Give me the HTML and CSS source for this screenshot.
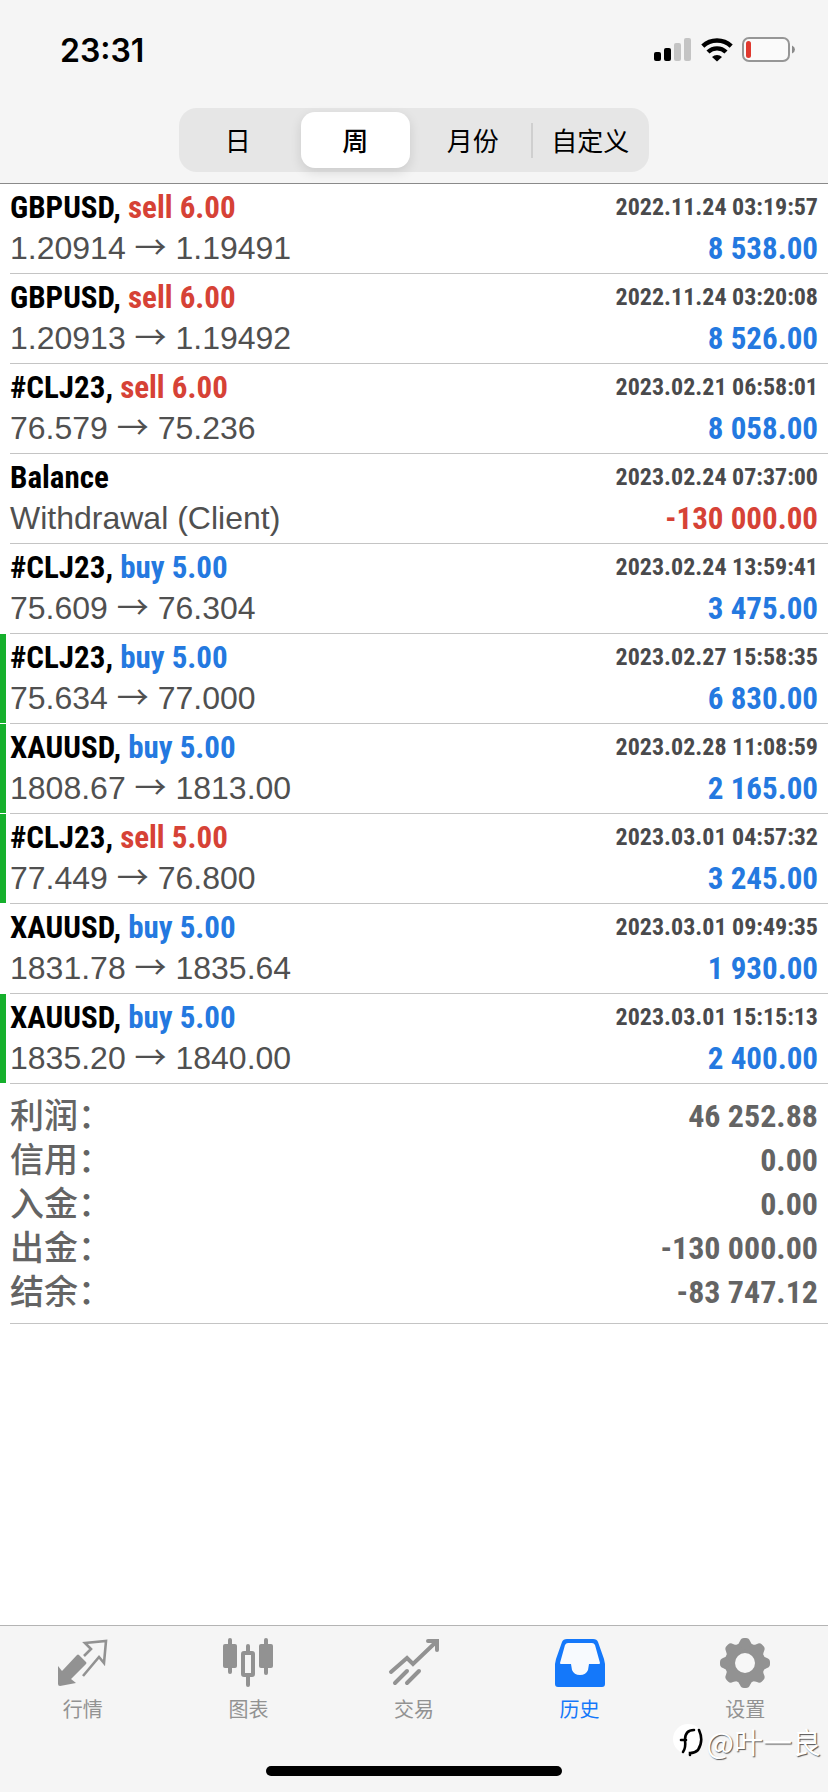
FILE: index.html
```html
<!DOCTYPE html>
<html lang="zh-CN">
<head>
<meta charset="utf-8">
<meta name="viewport" content="width=device-width, initial-scale=1">
<title>历史</title>
<link rel="stylesheet" href="styles.css">
</head>
<body>
<div class="app">
  <header class="top">
    <div class="status">
      <time class="clock">23:31</time>
      <div class="status-icons">
        <svg width="38" height="24" viewBox="0 0 38 24" aria-hidden="true">
          <rect x="0" y="14" width="7" height="9" rx="2"/>
          <rect x="10" y="10" width="7" height="13" rx="2"/>
          <rect x="20" y="5" width="7" height="18" rx="2" fill="#c4c4c4"/>
          <rect x="30" y="0" width="7" height="23" rx="2" fill="#c4c4c4"/>
        </svg>
        <svg width="32" height="24" viewBox="0 0 32 24" aria-hidden="true">
          <g fill="none" stroke="#000" stroke-width="4.4">
            <path d="M1.8 8.2A20.5 20.5 0 0 1 30.200 8.200"/>
            <path d="M7 14A13 13 0 0 1 25 14"/>
          </g>
          <path d="M11 19a7.400 7.400 0 0 1 10 0l-5 4.500z"/>
        </svg>
        <svg width="54" height="26" viewBox="0 0 54 26" aria-hidden="true">
          <rect x="1" y="1" width="46" height="23" rx="6" fill="#fafafa" stroke="#969696" stroke-width="2"/>
          <rect x="4" y="4" width="5" height="17" rx="2.500" fill="#e0392f"/>
          <path d="M50 8.500q3 1.500 3 4t-3 4z" fill="#8a8a8a"/>
        </svg>
      </div>
    </div>
    <div class="segments">
      <button class="segment" type="button">日</button>
      <button class="segment active" type="button" aria-pressed="true">周</button>
      <button class="segment" type="button">月份</button>
      <span class="divider"></span>
      <button class="segment" type="button">自定义</button>
    </div>
  </header>

  <main class="history">
    <ul class="deals">
      <li class="deal"><span class="mark"></span><div class="body">
        <div class="line"><span class="symbol">GBPUSD, <span class="sell">sell 6.00</span></span><time class="date">2022.11.24 03:19:57</time></div>
        <div class="line"><span class="price">1.20914 <span class="arrow">→</span> 1.19491</span><span class="amount buy">8 538.00</span></div>
      </div></li>
      <li class="deal"><span class="mark"></span><div class="body">
        <div class="line"><span class="symbol">GBPUSD, <span class="sell">sell 6.00</span></span><time class="date">2022.11.24 03:20:08</time></div>
        <div class="line"><span class="price">1.20913 <span class="arrow">→</span> 1.19492</span><span class="amount buy">8 526.00</span></div>
      </div></li>
      <li class="deal"><span class="mark"></span><div class="body">
        <div class="line"><span class="symbol">#CLJ23, <span class="sell">sell 6.00</span></span><time class="date">2023.02.21 06:58:01</time></div>
        <div class="line"><span class="price">76.579 <span class="arrow">→</span> 75.236</span><span class="amount buy">8 058.00</span></div>
      </div></li>
      <li class="deal"><span class="mark"></span><div class="body">
        <div class="line"><span class="symbol">Balance</span><time class="date">2023.02.24 07:37:00</time></div>
        <div class="line"><span class="price">Withdrawal (Client)</span><span class="amount sell">-130 000.00</span></div>
      </div></li>
      <li class="deal"><span class="mark"></span><div class="body">
        <div class="line"><span class="symbol">#CLJ23, <span class="buy">buy 5.00</span></span><time class="date">2023.02.24 13:59:41</time></div>
        <div class="line"><span class="price">75.609 <span class="arrow">→</span> 76.304</span><span class="amount buy">3 475.00</span></div>
      </div></li>
      <li class="deal"><span class="mark target"></span><div class="body">
        <div class="line"><span class="symbol">#CLJ23, <span class="buy">buy 5.00</span></span><time class="date">2023.02.27 15:58:35</time></div>
        <div class="line"><span class="price">75.634 <span class="arrow">→</span> 77.000</span><span class="amount buy">6 830.00</span></div>
      </div></li>
      <li class="deal"><span class="mark target"></span><div class="body">
        <div class="line"><span class="symbol">XAUUSD, <span class="buy">buy 5.00</span></span><time class="date">2023.02.28 11:08:59</time></div>
        <div class="line"><span class="price">1808.67 <span class="arrow">→</span> 1813.00</span><span class="amount buy">2 165.00</span></div>
      </div></li>
      <li class="deal"><span class="mark target"></span><div class="body">
        <div class="line"><span class="symbol">#CLJ23, <span class="sell">sell 5.00</span></span><time class="date">2023.03.01 04:57:32</time></div>
        <div class="line"><span class="price">77.449 <span class="arrow">→</span> 76.800</span><span class="amount buy">3 245.00</span></div>
      </div></li>
      <li class="deal"><span class="mark"></span><div class="body">
        <div class="line"><span class="symbol">XAUUSD, <span class="buy">buy 5.00</span></span><time class="date">2023.03.01 09:49:35</time></div>
        <div class="line"><span class="price">1831.78 <span class="arrow">→</span> 1835.64</span><span class="amount buy">1 930.00</span></div>
      </div></li>
      <li class="deal"><span class="mark target"></span><div class="body">
        <div class="line"><span class="symbol">XAUUSD, <span class="buy">buy 5.00</span></span><time class="date">2023.03.01 15:15:13</time></div>
        <div class="line"><span class="price">1835.20 <span class="arrow">→</span> 1840.00</span><span class="amount buy">2 400.00</span></div>
      </div></li>
    </ul>
    <dl class="summary">
      <div class="total"><dt>利润：</dt><dd>46 252.88</dd></div>
      <div class="total"><dt>信用：</dt><dd>0.00</dd></div>
      <div class="total"><dt>入金：</dt><dd>0.00</dd></div>
      <div class="total"><dt>出金：</dt><dd>-130 000.00</dd></div>
      <div class="total"><dt>结余：</dt><dd>-83 747.12</dd></div>
    </dl>
  </main>

  <footer class="bottom">
    <nav class="tabs">
      <a class="tab" href="#quotes">
        <svg width="52" height="52" viewBox="0 0 52 52" aria-hidden="true">
          <path fill="currentColor" d="M1 28l4 5L20 17q1-1 2 0l7 7q1 1 0 2L14 41l5 4-16 3q-2 0-2-2z"/>
          <path fill="none" stroke="currentColor" stroke-width="2.600" d="M27 18l7-7-6-6 21-2-2 22-5-6-16 19"/>
        </svg>
        <span>行情</span>
      </a>
      <a class="tab" href="#chart">
        <svg width="52" height="52" viewBox="0 0 52 52" aria-hidden="true" fill="currentColor">
          <rect x="6" y="0" width="4" height="36" rx="2"/><rect x="1" y="6" width="14" height="24" rx="2"/>
          <rect x="42" y="0" width="4" height="37" rx="2"/><rect x="37" y="6" width="14" height="24" rx="2"/>
          <rect x="24" y="6" width="4" height="10" rx="2"/><rect x="24" y="36" width="4" height="13" rx="2"/>
          <rect x="21" y="15" width="10" height="22" rx="1" fill="none" stroke="currentColor" stroke-width="4"/>
        </svg>
        <span>图表</span>
      </a>
      <a class="tab" href="#trade">
        <svg width="52" height="52" viewBox="0 0 52 52" aria-hidden="true" fill="none" stroke="currentColor" stroke-width="4" stroke-linecap="round">
          <path d="M3 34l16-14 6 6L48 4M7 45l12-12M19 45l12-12" stroke-linejoin="miter"/>
          <path d="M40 3h9v9"/>
        </svg>
        <span>交易</span>
      </a>
      <a class="tab current" href="#history" aria-current="page">
        <svg width="52" height="52" viewBox="0 0 52 52" aria-hidden="true">
          <path fill="currentColor" d="M13 1h26q4 0 5 3l6 17 1 5v20q0 3-3 3H4q-3 0-3-3V26l1-5L8 4q1-3 5-3z"/>
          <path fill="#f7fafe" d="M14 5h24q2 0 3 2l5 18q0 1-1 1H35l-1 6q-2 5-8 5t-8-5l-1-6H7q-1 0-1-1L11 7q1-2 3-2z"/>
        </svg>
        <span>历史</span>
      </a>
      <a class="tab" href="#settings">
        <svg width="52" height="52" viewBox="0 0 52 52" aria-hidden="true">
          <g fill="currentColor" transform="translate(26 25)">
            <circle r="20"/>
            <g id="teeth"><path id="tooth" d="M-9-17Q-6-19-5-22-4-25-1-25H1Q4-25 5-22 6-19 9-17V-10H-9z"/><use href="#tooth" transform="rotate(90)"/><use href="#tooth" transform="rotate(180)"/><use href="#tooth" transform="rotate(270)"/></g>
            <use href="#teeth" transform="rotate(45)"/>
            <circle r="10" fill="#f7f7f7"/>
          </g>
        </svg>
        <span>设置</span>
      </a>
    </nav>
    <div class="home-bar"></div>
    <div class="watermark">
      <svg width="32" height="34" viewBox="0 0 32 34" aria-hidden="true">
        <circle cx="15" cy="15" r="15" fill="#fff"/>
        <g fill="none" stroke="#000" stroke-width="2.600" stroke-linecap="round">
          <path d="M8 16h5M10 28Q13 24 12 16 12 6 21 6"/>
          <path d="M26 6Q31 17 25 26q-3 3-8 3v2"/>
        </g>
      </svg>
      <span>@叶一良</span>
    </div>
  </footer>
</div>
</body>
</html>
```
FILE: styles.css
```css
* {
  box-sizing: border-box;
}

body {
  margin: 0;
  background: #fff;
  color: #000;
  font-family: "Liberation Sans", "Noto Sans CJK SC", sans-serif;
}

.app {
  display: flex;
  flex-direction: column;
  min-height: 100vh;
}

/* Header */
.top {
  background: #f5f5f5;
  border-bottom: 1px solid #8a8a8a;
  padding-bottom: 11px;
}

.status {
  display: flex;
  justify-content: space-between;
  align-items: center;
  height: 108px;
  padding: 0 32px 8px 60px;
}

.clock {
  font-family: Inter, sans-serif;
  font-size: 32px;
  font-weight: 600;
}

.status-icons {
  display: flex;
  align-items: center;
  gap: 9px;
}

.segments {
  display: flex;
  align-items: center;
  width: 100%;
  max-width: 470px;
  height: 64px;
  margin: 0 auto;
  border-radius: 18px;
  background: #e6e6e6;
}

.segment {
  flex: 1 1 0;
  height: 56px;
  margin: 0 4px;
  padding: 0;
  border: 0;
  border-radius: 14px;
  background: transparent;
  color: #000;
  font-family: "Noto Sans CJK SC", sans-serif;
  font-size: 26px;
  line-height: 54px;
  white-space: nowrap;
}

.segment.active {
  background: #fff;
  box-shadow: 0 4px 12px rgba(0, 0, 0, 0.12);
  font-weight: 500;
}

.divider {
  width: 2px;
  height: 35px;
  margin: 0 -1px;
  background: #cfcfcf;
}

/* Deals */
.history {
  flex: 1;
}

.deals {
  margin: 0;
  padding: 0;
  list-style: none;
}

.deal {
  display: flex;
  gap: 4px;
}

.mark {
  flex: none;
  width: 6px;
  margin-bottom: 1px;
}

.target {
  background: #16b02c;
}

.body {
  flex: 1;
  padding: 3px 10px 4px 0;
  border-bottom: 1px solid #c4c4c4;
}

.line {
  display: flex;
  justify-content: space-between;
  height: 41px;
  line-height: 41px;
  white-space: nowrap;
}

.symbol,
.date,
.amount,
.total dd {
  font-family: "Roboto Condensed", "Arial Narrow", "Liberation Sans Narrow", sans-serif;
  font-weight: 700;
}

.symbol,
.amount {
  font-size: 31px;
}

.date {
  color: #4a4a4c;
  font-size: 24px;
}

.price {
  color: #505050;
  font-size: 32px;
}

.arrow {
  font-family: "Noto Sans CJK SC", sans-serif;
  line-height: 1;
}

.sell {
  color: #d64236;
}

.buy {
  color: #2479e0;
}

/* Totals */
.summary {
  margin: 0 0 0 10px;
  padding: 10px 10px 9px 0;
  border-bottom: 1px solid #c4c4c4;
  color: #646464;
}

.total {
  display: flex;
  justify-content: space-between;
  height: 44px;
  line-height: 44px;
}

.total dt {
  font-family: "Noto Sans CJK SC", sans-serif;
  font-size: 34px;
  font-weight: 500;
  line-height: 40px;
}

.total dd {
  margin: 0;
  font-size: 32px;
}

/* Tab bar */
.bottom {
  position: relative;
  padding: 12px 0 16px;
  border-top: 1px solid #b4b4b4;
  background: #f5f5f5;
}

.tabs {
  display: flex;
}

.tab {
  display: flex;
  flex: 1;
  flex-direction: column;
  align-items: center;
  gap: 4px;
  color: #929292;
  font-family: "Noto Sans CJK SC", sans-serif;
  font-size: 20px;
  line-height: 30px;
  text-decoration: none;
}

.tab.current {
  color: #1478fa;
}

.home-bar {
  width: 296px;
  height: 10px;
  margin: 42px auto 0;
  border-radius: 5px;
  background: #000;
}

.watermark {
  position: absolute;
  right: 7px;
  bottom: 32px;
  display: flex;
  align-items: center;
  gap: 2px;
  color: #fff;
  font-family: "Noto Sans CJK SC", sans-serif;
  font-size: 29px;
  line-height: 38px;
  text-shadow: 1px 1px 1px #555;
}
```
